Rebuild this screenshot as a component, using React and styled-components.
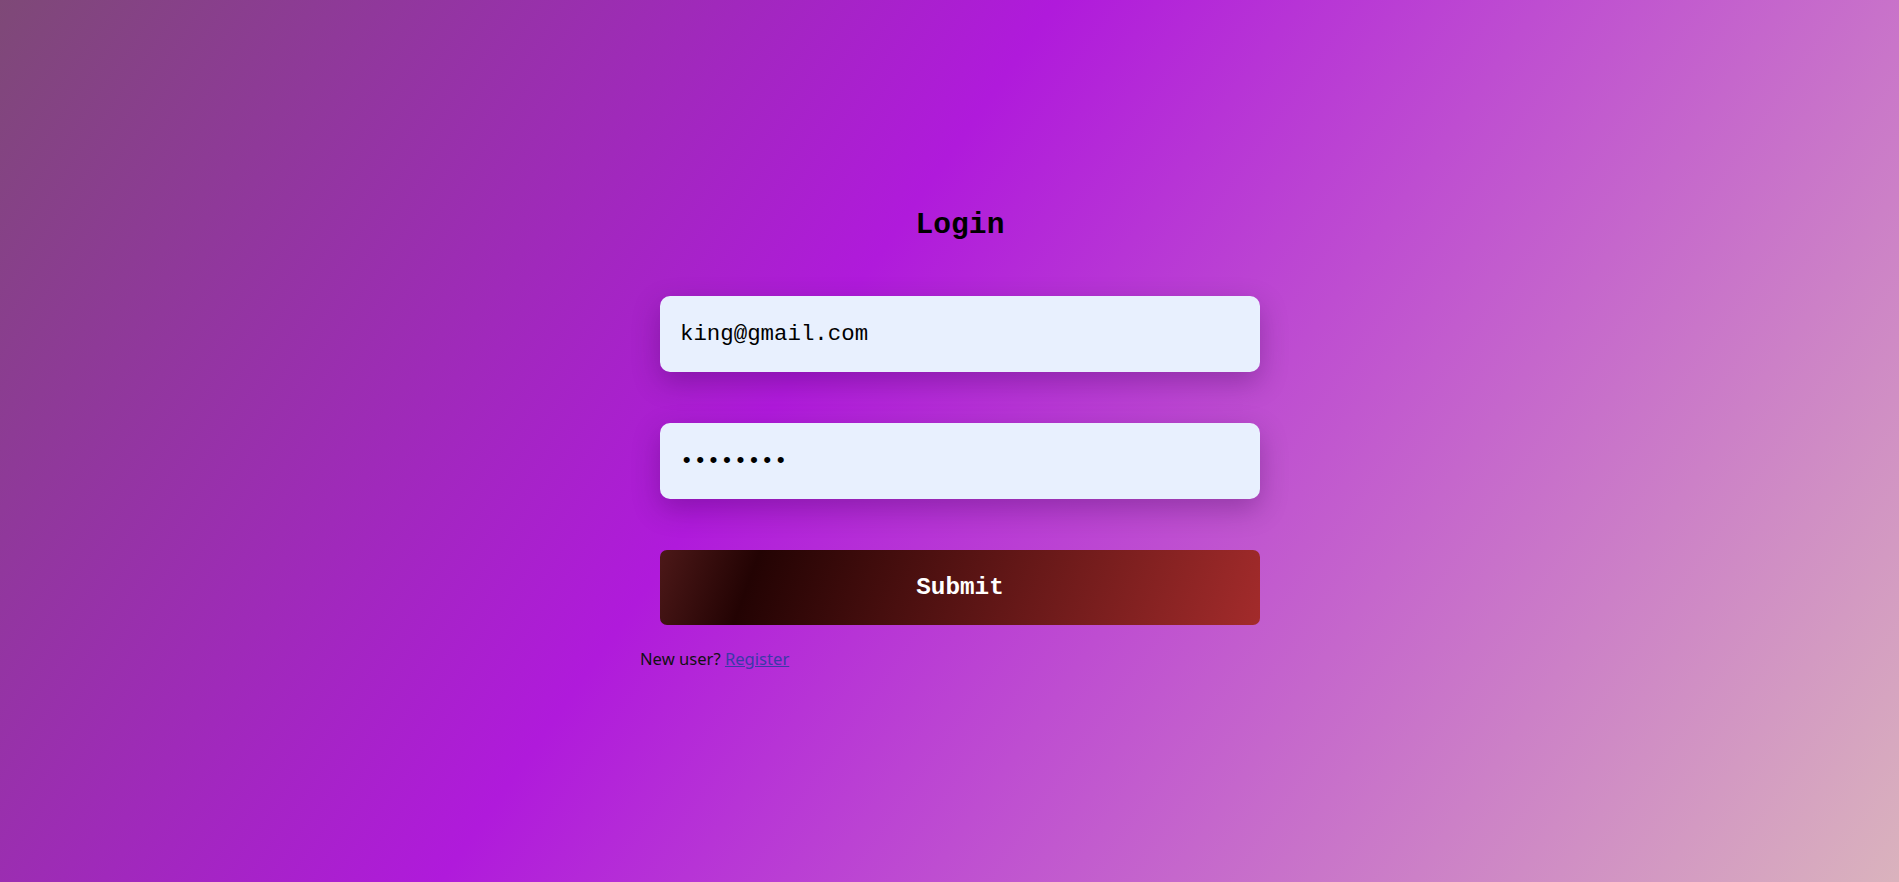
import React from 'react';
import styled, { createGlobalStyle } from 'styled-components';

const GlobalStyle = createGlobalStyle`
  * {
    box-sizing: border-box;
  }
  body {
    margin: 0;
    font-family: "Noto Sans", sans-serif;
  }
`;

// content sits a little right of and above the true centre in the reference
const Page = styled.div`
  min-height: 100vh;
  display: flex;
  align-items: center;
  justify-content: center;
  padding: 0 0 4px 21px;
  background: linear-gradient(125deg, #7e4977 0%, #b01adb 42%, #dab3bd 100%);
`;

const Form = styled.form`
  width: 640px;
  display: flex;
  flex-direction: column;
`;

const Title = styled.h1`
  margin: 0 0 54px;
  text-align: center;
  font-family: "Liberation Mono", monospace;
  font-size: 29.6px;
  font-weight: 700;
  color: #000;
`;

const Field = styled.input`
  align-self: center;
  width: 600px;
  height: 76px;
  margin-bottom: ${(p) => p.$gap}px;
  padding: 0 20px;
  border: none;
  border-radius: 10px;
  outline: none;
  background: #e8f0fe;
  box-shadow: 0 10px 28px rgba(40, 0, 60, 0.28);
  font-family: "Liberation Mono", monospace;
  font-size: 22.4px;
  color: #000;
`;

const SubmitButton = styled.button`
  align-self: center;
  width: 600px;
  height: 75px;
  border: none;
  border-radius: 7px;
  background: linear-gradient(110deg, #4c1818 0%, #230303 16%, #a32b2b 100%);
  font-family: "Liberation Mono", monospace;
  font-size: 24.3px;
  font-weight: 700;
  color: #fff;
  cursor: pointer;
`;

const Footer = styled.p`
  margin: 22px 0 0;
  font-size: 16.6px;
  color: #111;
`;

const Link = styled.a`
  color: #3b39a8;
  text-decoration: underline;
`;

export default function App() {
  return (
    <>
      <GlobalStyle />
      <Page>
        <Form onSubmit={(e) => e.preventDefault()}>
          <Title>Login</Title>
          <Field type="email" defaultValue="king@gmail.com" $gap={51} />
          <Field type="password" defaultValue="password" $gap={51} />
          <SubmitButton type="submit">Submit</SubmitButton>
          <Footer>
            New user? <Link href="#">Register</Link>
          </Footer>
        </Form>
      </Page>
    </>
  );
}
